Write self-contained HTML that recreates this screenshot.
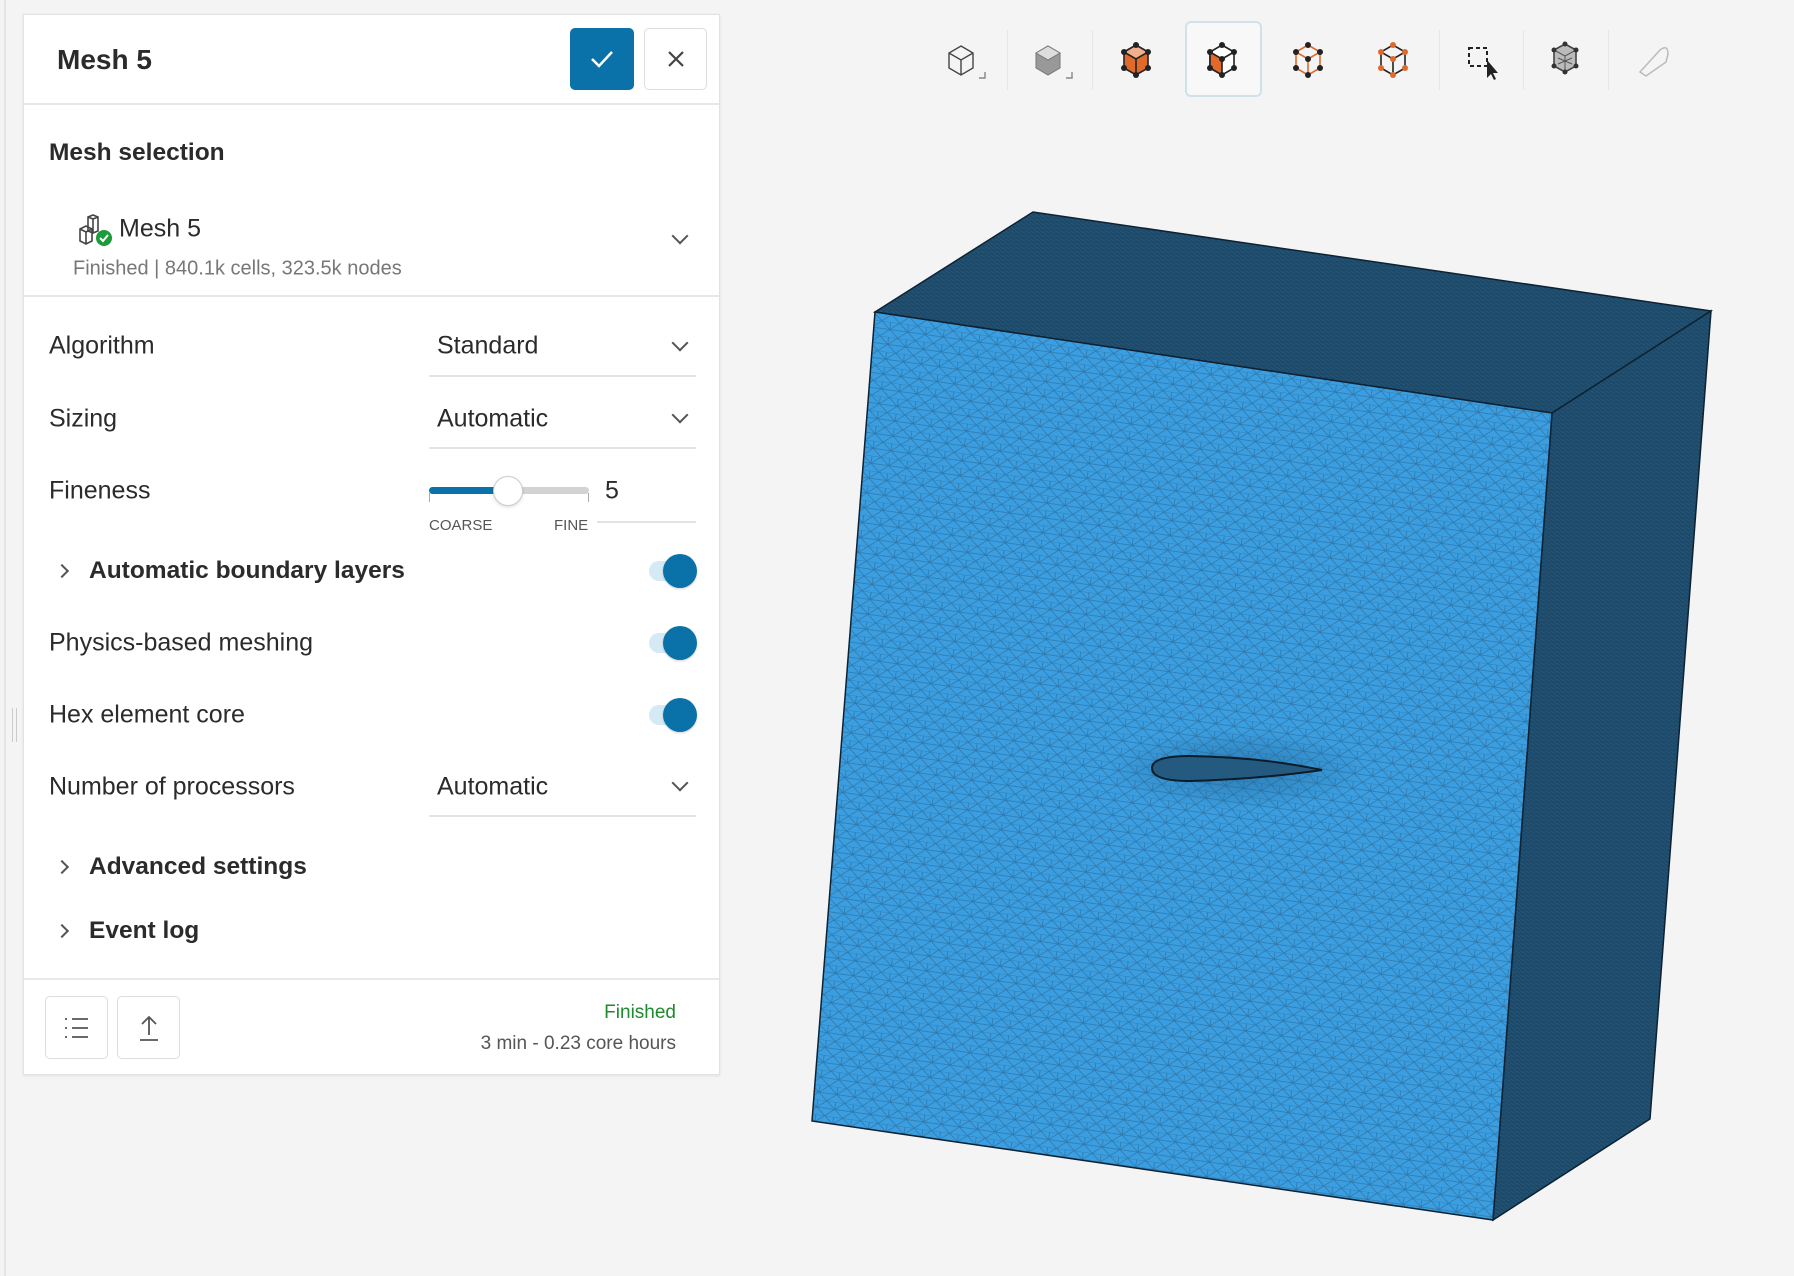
<!DOCTYPE html>
<html><head><meta charset="utf-8"><style>
*{box-sizing:border-box;margin:0;padding:0}
body{width:1794px;height:1276px;background:#f4f4f4;font-family:"Liberation Sans",sans-serif;color:#2b2b2b;position:relative;overflow:hidden}
.abs{position:absolute}
.panel{left:23px;top:14px;width:697px;height:1061px;background:#fff;border:1px solid #e2e2e2;box-shadow:0 1px 3px rgba(0,0,0,.08)}
.hl{position:absolute;left:0;right:0;height:2px;background:#e8e8e8}
.lbl{position:absolute;left:25px;font-size:25px;transform:translateY(-50%)}
.bold{font-weight:bold;font-size:24.5px}
.dd{position:absolute;left:405px;width:267px;border-bottom:2px solid #e3e3e3}
.dd span{position:absolute;left:8px;font-size:25px;transform:translateY(-50%)}
.chev{position:absolute;width:12px;height:12px;border-right:2px solid #555;border-bottom:2px solid #555;transform:rotate(45deg)}
.rchev{position:absolute;width:10px;height:10px;border-right:2px solid #555;border-bottom:2px solid #555;transform:rotate(-45deg)}
.tog{position:absolute;left:625px;width:46px;height:20px;border-radius:10px;background:#d6eaf5}
.tog i{position:absolute;right:-2px;top:-7px;width:34px;height:34px;border-radius:50%;background:#0a72a8;box-shadow:0 1px 2px rgba(0,0,0,.2)}
.fbtn{position:absolute;top:981px;width:63px;height:63px;border:1px solid #ddd;border-radius:5px;background:#fff}
.sep{position:absolute;top:30px;width:1px;height:60px;background:#e6e6e6}
</style></head><body>
<div class="abs" style="left:4px;top:0;width:2px;height:1276px;background:#e4e4e4"></div>
<div class="abs" style="left:12px;top:708px;width:5px;height:34px;border-left:1px solid #ccc;border-right:1px solid #ccc"></div>

<div class="abs panel">
  <div class="abs" style="left:33px;top:45px;font-size:28px;font-weight:bold;transform:translateY(-50%)">Mesh 5</div>
  <div class="abs" style="left:546px;top:13px;width:64px;height:62px;background:#0a72a8;border-radius:5px">
    <svg width="64" height="62"><path d="M22 31 L29 38 L42 24" fill="none" stroke="#fff" stroke-width="2.5"/></svg></div>
  <div class="abs" style="left:620px;top:13px;width:63px;height:62px;border:1px solid #ddd;border-radius:5px">
    <svg width="62" height="60"><path d="M24 23 L38 37 M38 23 L24 37" stroke="#444" stroke-width="2.2"/></svg></div>
  <div class="hl" style="top:88px"></div>

  <div class="lbl bold" style="top:138px;font-size:24.5px">Mesh selection</div>
  <svg class="abs" style="left:54px;top:198px" width="36" height="34" viewBox="0 0 36 34"><g fill="none" stroke="#444" stroke-width="1.6"><path d="M10 4 L15 2 L20 4 L20 18 L15 20 L10 18 Z M10 4 L15 6 L20 4 M15 6 L15 20"/><path d="M2 16 L8 13 L14 16 L14 28 L8 31 L2 28 Z M2 16 L8 19 L14 16 M8 19 L8 31"/></g><circle cx="26" cy="25" r="8" fill="#1e9a3a"/><path d="M22 25 L25 28 L30 22" fill="none" stroke="#fff" stroke-width="2"/></svg>
  <div class="abs" style="left:95px;top:214px;font-size:25px;transform:translateY(-50%)">Mesh 5</div>
  <div class="abs" style="left:49px;top:254px;font-size:20px;color:#777;transform:translateY(-50%)">Finished | 840.1k cells, 323.5k nodes</div>
  <div class="chev" style="left:650px;top:215px"></div>
  <div class="hl" style="top:280px"></div>

  <div class="lbl" style="top:331px">Algorithm</div>
  <div class="dd" style="top:300px;height:62px"><span style="top:31px">Standard</span></div>
  <div class="chev" style="left:650px;top:322px"></div>

  <div class="lbl" style="top:404px">Sizing</div>
  <div class="dd" style="top:372px;height:62px"><span style="top:32px">Automatic</span></div>
  <div class="chev" style="left:650px;top:394px"></div>

  <div class="lbl" style="top:476px">Fineness</div>
  <div class="abs" style="left:405px;top:472px;width:160px;height:7px;border-radius:4px;background:#d3d3d3"></div>
  <div class="abs" style="left:405px;top:472px;width:80px;height:7px;border-radius:4px;background:#0a72a8"></div>
  <div class="abs" style="left:405px;top:478px;width:1px;height:9px;background:#aaa"></div>
  <div class="abs" style="left:564px;top:478px;width:1px;height:9px;background:#aaa"></div>
  <div class="abs" style="left:469px;top:461px;width:30px;height:30px;border-radius:50%;background:#fff;border:1px solid #ccc;box-shadow:0 1px 3px rgba(0,0,0,.15)"></div>
  <div class="abs" style="left:405px;top:502px;font-size:15px;color:#555">COARSE</div>
  <div class="abs" style="left:530px;top:502px;font-size:15px;color:#555">FINE</div>
  <div class="abs" style="left:581px;top:476px;font-size:25px;transform:translateY(-50%)">5</div>
  <div class="abs" style="left:573px;top:506px;width:99px;height:2px;background:#e3e3e3"></div>

  <div class="rchev" style="left:33px;top:551px"></div>
  <div class="lbl bold" style="left:65px;top:556px">Automatic boundary layers</div>
  <div class="tog" style="top:546px"><i></i></div>

  <div class="lbl" style="top:628px">Physics-based meshing</div>
  <div class="tog" style="top:618px"><i></i></div>

  <div class="lbl" style="top:700px">Hex element core</div>
  <div class="tog" style="top:690px"><i></i></div>

  <div class="lbl" style="top:772px">Number of processors</div>
  <div class="dd" style="top:740px;height:62px"><span style="top:32px">Automatic</span></div>
  <div class="chev" style="left:650px;top:762px"></div>

  <div class="rchev" style="left:33px;top:847px"></div>
  <div class="lbl bold" style="left:65px;top:852px">Advanced settings</div>
  <div class="rchev" style="left:33px;top:911px"></div>
  <div class="lbl bold" style="left:65px;top:916px">Event log</div>

  <div class="hl" style="top:963px"></div>
  <div class="fbtn" style="left:21px"><svg width="62" height="62"><g stroke="#555" stroke-width="1.8"><path d="M26 22 H42 M26 31 H42 M26 40 H42"/><path d="M19 22 h2 M19 31 h2 M19 40 h2"/></g></svg></div>
  <div class="fbtn" style="left:93px"><svg width="62" height="62"><g stroke="#555" stroke-width="1.8" fill="none"><path d="M31 20 V38 M24 27 L31 20 L38 27 M22 43 H40"/></g></svg></div>
  <div class="abs" style="right:43px;top:998px;font-size:19px;color:#1f8a2e;transform:translateY(-50%)">Finished</div>
  <div class="abs" style="right:43px;top:1029px;font-size:19px;color:#555;transform:translateY(-50%)">3 min - 0.23 core hours</div>
</div>

<div class="abs" style="left:1185px;top:21px;width:77px;height:76px;border:2px solid #cfe2ec;border-radius:6px;background:#f8f8f8"></div>
<div class="sep" style="left:1007px"></div><div class="sep" style="left:1092px"></div><div class="sep" style="left:1439px"></div><div class="sep" style="left:1523px"></div><div class="sep" style="left:1608px"></div>
<svg class="abs" style="left:0;top:0" width="1794" height="120">
 <g fill="none" stroke="#444" stroke-width="1.4">
  <path d="M961 46 L973 53 L973 68 L961 75 L949 68 L949 53 Z M949 53 L961 60 L973 53 M961 60 V75"/>
  <path d="M979 78 h6 v-6" stroke="#888"/>
  <path d="M1066 78 h6 v-6" stroke="#888"/>
 </g>
 <path d="M1048 46 L1060 53 L1060 68 L1048 75 L1036 68 L1036 53 Z" fill="#999" stroke="#777"/>
 <path d="M1036 53 L1048 60 L1060 53 L1048 46 Z" fill="#ddd" stroke="#777"/>
 <path d="M1136 45 L1148 52 L1148 68 L1136 75 L1124 68 L1124 52 Z" fill="#e06a2c" stroke="#222" stroke-width="1.6"/>
 <path d="M1124 52 L1136 59 L1148 52 L1136 45 Z" fill="#f0b08e" stroke="#222" stroke-width="1.6"/>
 <path d="M1136 59 V75" stroke="#222" stroke-width="1.6"/>
 <path d="M1222 45 L1234 52 L1234 68 L1222 75 L1210 68 L1210 52 Z" fill="#fff" stroke="#222" stroke-width="1.6"/>
 <path d="M1210 52 L1222 59 L1222 75 L1210 68 Z" fill="#e06a2c" stroke="#222" stroke-width="1.6"/>
 <path d="M1222 59 L1234 52" stroke="#222" stroke-width="1.6"/>
 <g fill="#222"><circle cx="1222" cy="45" r="3"/><circle cx="1234" cy="52" r="3"/><circle cx="1234" cy="68" r="3"/><circle cx="1222" cy="75" r="3"/><circle cx="1210" cy="68" r="3"/><circle cx="1210" cy="52" r="3"/><circle cx="1222" cy="59" r="3"/>
 <circle cx="1136" cy="45" r="3"/><circle cx="1148" cy="52" r="3"/><circle cx="1148" cy="68" r="3"/><circle cx="1136" cy="75" r="3"/><circle cx="1124" cy="68" r="3"/><circle cx="1124" cy="52" r="3"/></g>
 <path d="M1308 45 L1320 52 L1320 68 L1308 75 L1296 68 L1296 52 Z M1296 52 L1308 59 L1320 52 M1308 59 V75" fill="none" stroke="#e06a2c" stroke-width="1.6"/>
 <g fill="#222"><circle cx="1308" cy="45" r="3"/><circle cx="1320" cy="52" r="3"/><circle cx="1320" cy="68" r="3"/><circle cx="1308" cy="75" r="3"/><circle cx="1296" cy="68" r="3"/><circle cx="1296" cy="52" r="3"/><circle cx="1308" cy="59" r="3"/></g>
 <path d="M1393 45 L1405 52 L1405 68 L1393 75 L1381 68 L1381 52 Z M1381 52 L1393 59 L1405 52 M1393 59 V75" fill="none" stroke="#222" stroke-width="1.6"/>
 <g fill="#e06a2c"><circle cx="1393" cy="45" r="3"/><circle cx="1405" cy="52" r="3"/><circle cx="1405" cy="68" r="3"/><circle cx="1393" cy="75" r="3"/><circle cx="1381" cy="68" r="3"/><circle cx="1381" cy="52" r="3"/><circle cx="1393" cy="59" r="3"/></g>
 <rect x="1469" y="48" width="18" height="18" fill="none" stroke="#222" stroke-width="2" stroke-dasharray="4 3"/>
 <path d="M1487 60 L1487 78 L1491 74 L1494 80 L1496 79 L1493 73 L1498 73 Z" fill="#222"/>
 <path d="M1565 44 L1576 50 L1576 66 L1565 72 L1554 66 L1554 50 Z" fill="#bbb" stroke="#444" stroke-width="1.6"/>
 <path d="M1554 50 L1565 56 L1576 50 M1565 56 V72 M1558 58 L1572 64 M1558 64 L1572 58" fill="none" stroke="#555"/>
 <g fill="#333"><circle cx="1565" cy="44" r="2.5"/><circle cx="1576" cy="50" r="2.5"/><circle cx="1576" cy="66" r="2.5"/><circle cx="1565" cy="72" r="2.5"/><circle cx="1554" cy="66" r="2.5"/><circle cx="1554" cy="50" r="2.5"/></g>
 <path d="M1640 72 L1660 50 Q1668 44 1668 54 L1666 62 L1646 76 Z M1640 72 L1646 76" fill="none" stroke="#bbb" stroke-width="1.5"/>
</svg>

<svg class="abs" style="left:0;top:0" width="1794" height="1276">
 <defs>
  <pattern id="tri" width="18" height="15" patternUnits="userSpaceOnUse" patternTransform="rotate(8)">
   <rect width="18" height="15" fill="#3b9ee0"/>
   <path d="M0 0 H18 M0 7.5 H18 M0 0 L9 7.5 L18 0 M0 15 L9 7.5 L18 15 M9 0 V7.5" stroke="#2f78aa" stroke-width="0.8" fill="none"/>
  </pattern>
  <pattern id="dk" width="5" height="4" patternUnits="userSpaceOnUse">
   <rect width="5" height="4" fill="#215274"/>
   <path d="M0 2 H5 M0 0 L5 4" stroke="#1a405c" stroke-width="0.6"/>
  </pattern>
  <radialGradient id="halo" cx="0.5" cy="0.5" r="0.5"><stop offset="0" stop-color="#1f5f8e" stop-opacity=".55"/><stop offset="1" stop-color="#1f5f8e" stop-opacity="0"/></radialGradient>
 </defs>
 <path d="M875 312 L1033 212 L1711 311 L1552 413 Z" fill="url(#dk)" stroke="#0d2233" stroke-width="1.5"/>
 <path d="M1552 413 L1711 311 L1650 1119 L1493 1220 Z" fill="url(#dk)" stroke="#0d2233" stroke-width="1.5"/>
 <path d="M875 312 L1552 413 L1493 1220 L812 1121 Z" fill="url(#tri)" stroke="#0d2233" stroke-width="1.5"/>
 <ellipse cx="1237" cy="770" rx="130" ry="40" fill="url(#halo)"/>
 <path d="M1152 768 Q1152 756 1190 756 Q1260 757 1322 770 Q1260 779 1190 781 Q1152 781 1152 768 Z" fill="#245a80" stroke="#0b1c2a" stroke-width="2"/>
</svg>
</body></html>
